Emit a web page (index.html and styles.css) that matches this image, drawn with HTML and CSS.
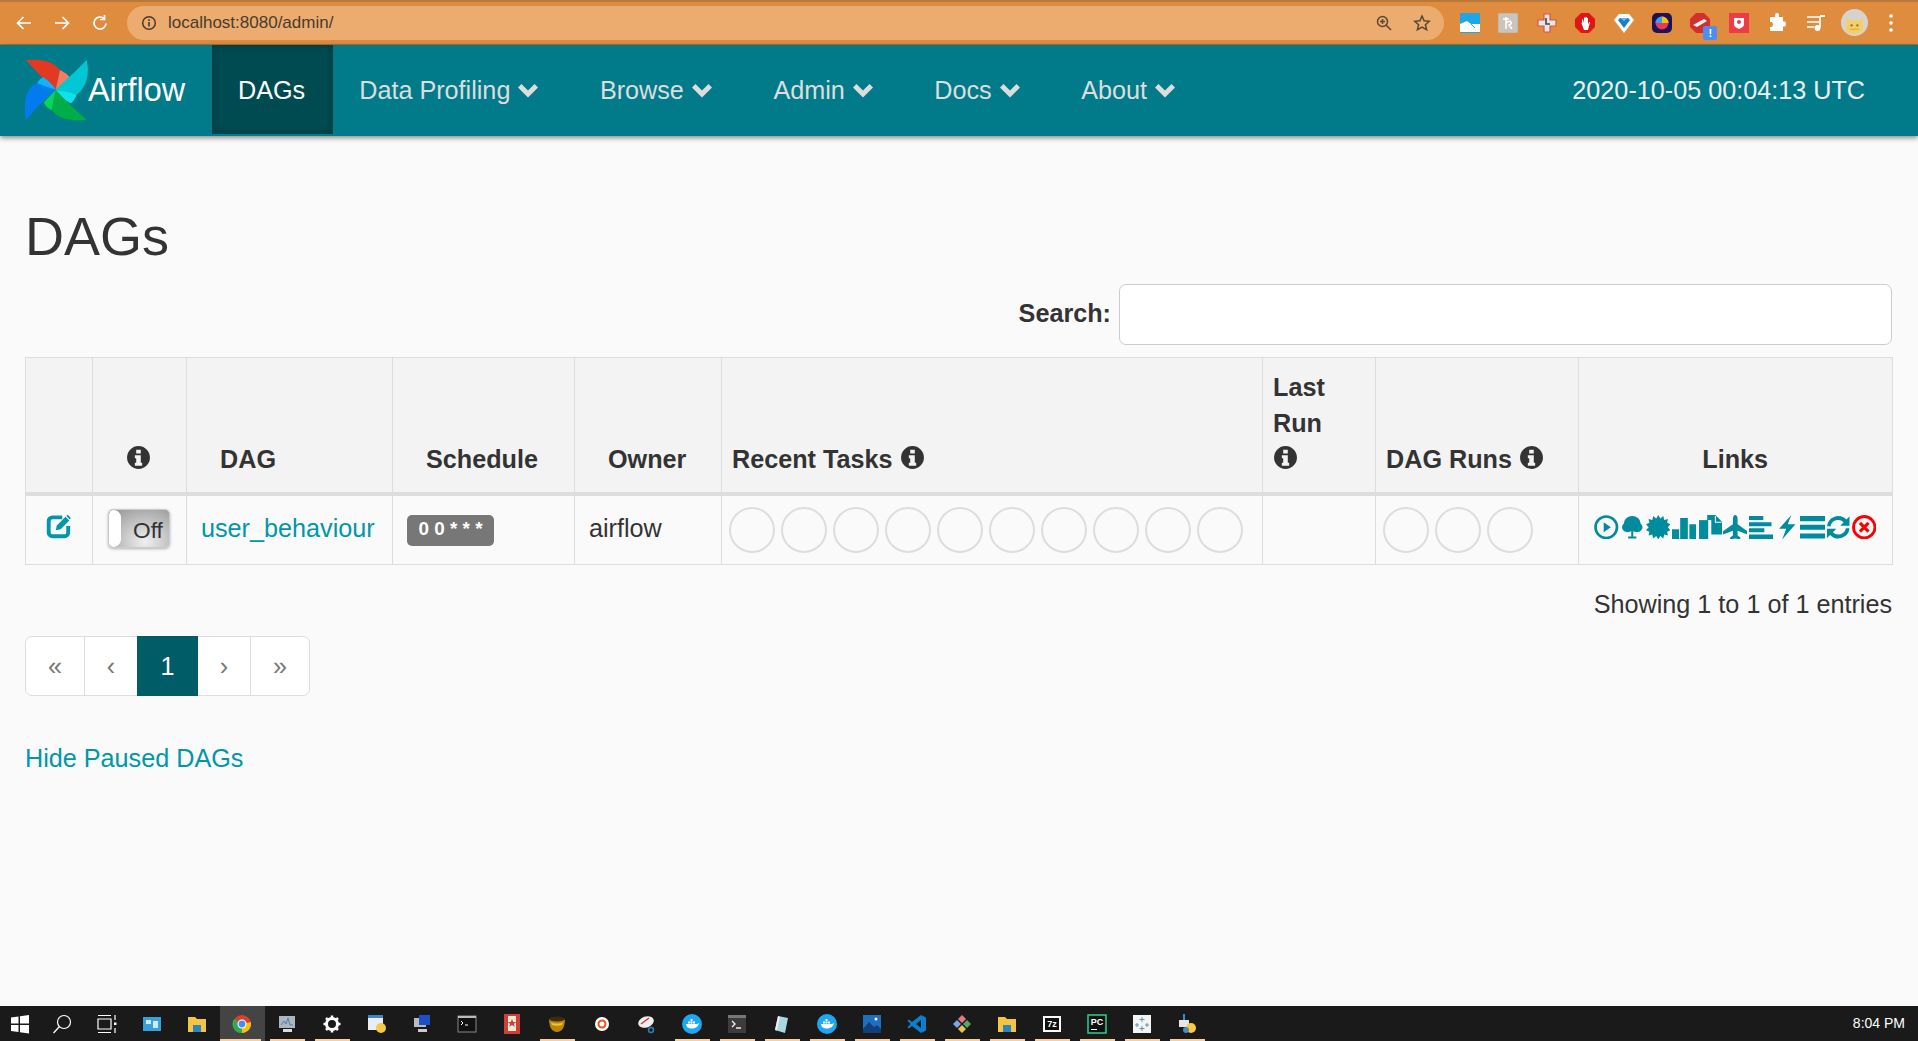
FILE: index.html
```html
<!DOCTYPE html>
<html lang="en">
<head>
    <meta charset="UTF-8">
    <title>Airflow - DAGs</title>
    <link rel="stylesheet" href="styles.css">
</head>
<body>
    <svg class="defs" width="0" height="0">
        <symbol id="info" viewBox="0 0 24 24"><path fill-rule="evenodd" d="M12 1a11 11 0 1 0 0 22 11 11 0 0 0 0-22zM9.800 4.500h4.400v3.700H9.800zM8.500 9.800h5.700v7.200h1.300v2.800h-7v-2.800h1.300v-4.400H8.500z"/></symbol>
        <symbol id="chev" viewBox="0 0 24 24"><path d="M2 9.500 5.500 6 12 12.500 18.500 6 22 9.500 12 19.500z"/></symbol>
    </svg>

    <div class="chrome">
        <div class="chrome-nav">
            <svg class="ci" viewBox="0 0 20 20"><path d="M17 10H4M9.500 4 3.500 10l6 6" fill="none" stroke="#fff" stroke-width="1.700"/></svg>
            <svg class="ci" viewBox="0 0 20 20"><path d="M3 10h13M10.500 4l6 6-6 6" fill="none" stroke="#fff" stroke-width="1.700"/></svg>
            <svg class="ci" viewBox="0 0 20 20"><path d="M16 10.500A6 6 0 1 1 14 5.500M14.500 2v4.500H10" fill="none" stroke="#fff" stroke-width="1.700"/></svg>
        </div>
        <div class="omnibox">
            <svg class="omni-i" viewBox="0 0 16 16"><circle cx="8" cy="8" r="6.300" fill="none" stroke="#4d3a28" stroke-width="1.500"/><path d="M7.200 7h1.600v4.500H7.200zM7.200 4.300h1.600v1.600H7.200z" fill="#4d3a28"/></svg>
            <span class="url">localhost:8080/admin/</span>
            <svg class="omni-r" viewBox="0 0 18 18"><circle cx="7.500" cy="7.500" r="5" fill="none" stroke="#5b4632" stroke-width="1.500"/><path d="M11 11l5 5M5 7.500h5M7.500 5v5" stroke="#5b4632" stroke-width="1.500"/></svg>
            <svg class="omni-r" viewBox="0 0 18 18"><path d="M9 2l2.100 4.800 5.200.5-3.900 3.400 1.200 5.100L9 13.100l-4.600 2.700 1.200-5.100-3.900-3.400 5.200-.5z" fill="none" stroke="#5b4632" stroke-width="1.500"/></svg>
        </div>
        <div class="exts">
            <svg viewBox="0 0 20 20"><rect width="20" height="20" rx="1" fill="#1ea7e8"/><path d="M0 11l7-3 4 3h9v8H0z" fill="#fff"/><path d="M11 11l4 4" stroke="#1ea7e8"/></svg>
            <svg viewBox="0 0 20 20"><rect width="20" height="20" rx="2" fill="#c9c4bd" stroke="#b5b0a9"/><path d="M8 4v12M5 6h6M8 10c3-3 6-2 5 1l-2 1 3 4" fill="none" stroke="#fff" stroke-width="1.500"/></svg>
            <svg viewBox="0 0 20 20"><path d="M7 1h6v6h6v6h-6v6H7v-6H1V7h6z" fill="#e6e6e6" stroke="#d9534f" stroke-width="1.200"/><path d="M9 5v6h4" fill="none" stroke="#444" stroke-width="1.600"/></svg>
            <svg viewBox="0 0 20 20"><path d="M6 0h8l6 6v8l-6 6H6l-6-6V6z" fill="#e31414"/><path d="M6 9l3 8h4l2-8-1 0-1 3V5l-1 0v4V4h-1v5V4.500H9V10L8 6.500H7v4z" fill="#fff"/></svg>
            <svg viewBox="0 0 20 20"><path d="M5 1h10l5 6-10 13L0 7z" fill="#fff"/><path d="M6 5h8l2 2-6 8-6-8z" fill="#1c7fc4"/><path d="M6 5h8l-4 3z" fill="#5fc0ef"/></svg>
            <svg viewBox="0 0 20 20"><rect width="20" height="20" rx="5" fill="#1d1157"/><circle cx="10" cy="10" r="6.500" fill="#e8395b"/><path d="M10 3.500V10h6.500a6.500 6.500 0 0 0-6.500-6.500z" fill="#f4c20d"/><path d="M10 3.500V10H3.500a6.500 6.500 0 0 1 6.500-6.500z" fill="#36a2eb"/></svg>
            <span class="ext-badge"><svg viewBox="0 0 20 20"><path d="M6 0h8l6 6v8l-6 6H6l-6-6V6z" fill="#d32f2f"/><path d="M3 12l11-6 3 2-10 6z" fill="#f1f1f1"/></svg><b>!</b></span>
            <svg viewBox="0 0 20 20"><rect width="20" height="20" fill="#ee3b45"/><path d="M5 5h10v6c0 3-3 4-5 5-2-1-5-2-5-5z" fill="#fff"/><circle cx="10" cy="9" r="2" fill="#ee3b45"/></svg>
            <svg viewBox="0 0 20 20"><path d="M8 1a2 2 0 0 1 4 0c0 1 0 2-.5 2H16v4.500c1 0 3-.5 3 2.500s-2 2.500-3 2.500V17H3v-4c1 0 3 .5 3-2.500S4 8 3 8V3h5.500C8 3 8 2 8 1z" fill="#fff" transform="translate(0 1)"/></svg>
            <svg viewBox="0 0 20 20"><path d="M1 4h12M1 9h12M1 14h7M14 3v11" fill="none" stroke="#fff" stroke-width="1.700"/><path d="M14 3h5" stroke="#fff" stroke-width="2"/><circle cx="11.500" cy="15" r="3" fill="#fff"/></svg>
            <svg class="avatar" viewBox="0 0 28 28"><circle cx="14" cy="14" r="14" fill="#d6d3cf"/><path d="M6 9l4 3h8l4-3 1 13c-3 5-15 5-18 0z" fill="#f3cf6a"/><circle cx="11" cy="17" r="1.200" fill="#8a6d1f"/><circle cx="17" cy="17" r="1.200" fill="#8a6d1f"/><path d="M9 21h10" stroke="#d8a93f"/></svg>
            <svg class="dots" viewBox="0 0 6 20"><circle cx="3" cy="3" r="1.800" fill="#fff"/><circle cx="3" cy="10" r="1.800" fill="#fff"/><circle cx="3" cy="17" r="1.800" fill="#fff"/></svg>
        </div>
    </div>

    <nav class="navbar">
        <a class="brand">
            <svg class="logo" viewBox="0 0 216 216">
                <path d="M18 18C60 15 95 18 120 48L107 107C80 85 50 55 18 18Z" fill="#e43921"/>
                <path d="M120 48C135 55 148 65 148 72C135 88 120 100 107 107Z" fill="#f37d64"/>
                <path d="M107 107C130 85 170 50 200 18C210 60 200 100 170 122Z" fill="#00c7d4"/>
                <path d="M107 107C125 110 155 115 170 122C165 135 158 145 152 148C130 135 115 122 107 107Z" fill="#11e1ee"/>
                <path d="M107 107C135 140 170 170 200 198C160 200 120 200 95 168Z" fill="#00ad46"/>
                <path d="M107 107L95 168C85 165 75 155 72 145C85 130 98 118 107 107Z" fill="#04d659"/>
                <path d="M107 107C80 130 45 165 18 198C10 150 15 100 52 88Z" fill="#017cee"/>
                <path d="M107 107C90 102 70 95 52 88C55 80 62 73 70 70C85 80 100 95 107 107Z" fill="#0cb6ff"/>
            </svg>
            Airflow
        </a>
        <a class="nav-item active">DAGs</a>
        <a class="nav-item">Data Profiling <svg class="chev"><use href="#chev"/></svg></a>
        <a class="nav-item">Browse <svg class="chev"><use href="#chev"/></svg></a>
        <a class="nav-item">Admin <svg class="chev"><use href="#chev"/></svg></a>
        <a class="nav-item">Docs <svg class="chev"><use href="#chev"/></svg></a>
        <a class="nav-item">About <svg class="chev"><use href="#chev"/></svg></a>
        <span class="clock">2020-10-05 00:04:13 UTC</span>
    </nav>

    <main class="container">
        <h1>DAGs</h1>
        <div class="search-row">
            <label for="search">Search:</label>
            <input id="search" type="text">
        </div>
        <table class="dags">
            <thead>
                <tr>
                    <th class="c-edit"></th>
                    <th class="c-toggle center"><svg class="info shift"><use href="#info"/></svg></th>
                    <th class="c-dag wide">DAG</th>
                    <th class="c-sched wide">Schedule</th>
                    <th class="c-owner wide">Owner</th>
                    <th class="c-tasks">Recent Tasks <svg class="info"><use href="#info"/></svg></th>
                    <th class="c-last">Last<br>Run<br><svg class="info"><use href="#info"/></svg></th>
                    <th class="c-runs">DAG Runs <svg class="info"><use href="#info"/></svg></th>
                    <th class="c-links center">Links</th>
                </tr>
            </thead>
            <tbody>
                <tr>
                    <td class="center">
                        <svg class="edit" viewBox="0 0 24 24"><path d="M15 4H6a3.500 3.500 0 0 0-3.500 3.500v10.500A3.500 3.500 0 0 0 6 21.500h11a3.500 3.500 0 0 0 3.500-3.500v-6" fill="none" stroke="#0097a7" stroke-width="3.600"/><path d="M9 16l1-4.500 8-8 3.500 3.500-8 8z" fill="#0097a7"/><path d="M20 1.500l3 3-1.200 1.300-3-3z" fill="#0097a7"/></svg>
                    </td>
                    <td class="center"><span class="switch"><span class="switch-handle"></span><span class="switch-label">Off</span></span></td>
                    <td><a class="link">user_behaviour</a></td>
                    <td><span class="badge">0 0 * * *</span></td>
                    <td>airflow</td>
                    <td class="tight"><div class="circles"><i></i><i></i><i></i><i></i><i></i><i></i><i></i><i></i><i></i><i></i></div></td>
                    <td></td>
                    <td class="tight"><div class="circles"><i></i><i></i><i></i></div></td>
                    <td class="tight">
                        <div class="links">
                            <svg viewBox="0 0 24 24"><circle cx="12" cy="12" r="10.500" fill="none" stroke="#008c9c" stroke-width="2.600"/><path d="M9.500 7l7 5-7 5z" fill="#008c9c"/></svg>
                            <svg viewBox="0 0 24 24"><path d="M11 16c-4 2-9 0-9-4 0-2 1-3 2-4 0-4 4-7 8-7s8 3 8 7c1 1 2 2 2 4 0 4-5 6-9 4v5h3v2H8v-2h3z" fill="#008c9c"/></svg>
                            <svg viewBox="0 0 24 24"><path d="M12 0l2 3.500L17 1l.8 3.800 3.700-.8-.8 3.700L24 9l-2.600 3 2.600 3-3.300 1.300.8 3.700-3.700-.8L17 23l-3-2.500-2 3.500-2-3.500L7 23l-.8-3.800-3.700.8.8-3.700L0 15l2.600-3L0 9l3.300-1.300L2.500 4l3.700.8L7 1l3 2.500z" fill="#008c9c"/></svg>
                            <svg viewBox="0 0 24 24"><path d="M1 14h7v10H1zM9 3h7.500v21H9zM18 9h6.500v15H18z" fill="#008c9c"/></svg>
                            <svg viewBox="0 0 24 24"><path d="M2 5h9v19H2z" fill="#008c9c"/><path d="M10 0h8l7 7v12H14V5h-4z" fill="#008c9c"/><path d="M18 1v6h6" fill="none" stroke="#fafafa" stroke-width="1"/></svg>
                            <svg viewBox="0 0 24 24"><path d="M12 0c1.500 0 2.300 2 2.300 4v5L24 16v3l-9.700-3.500V20l2.700 2v2l-5-1-5 1v-2l2.700-2v-4.500L0 19v-3l9.700-7V4c0-2 .8-4 2.300-4z" fill="#008c9c"/></svg>
                            <svg viewBox="0 0 24 24"><path d="M0 1h14v4H0zM0 7h22v4H0zM0 13h15v4H0zM0 19h25v5H0z" fill="#008c9c"/></svg>
                            <svg viewBox="0 0 24 24"><path d="M16 0L4 13.500h7L7 24l13-15h-7.500z" fill="#008c9c"/></svg>
                            <svg viewBox="0 0 24 24"><path d="M0 1h25v5H0zM0 9.500h25v5H0zM0 18h25v5H0z" fill="#008c9c"/></svg>
                            <svg viewBox="0 0 24 24"><path d="M1 11A11 11 0 0 1 20 4.500L23 1.500v9h-9l3.300-3.300A7.500 7.500 0 0 0 4.500 11zM23 13A11 11 0 0 1 4 19.500L1 22.500v-9h9l-3.300 3.300A7.500 7.500 0 0 0 19.500 13z" fill="#008c9c"/></svg>
                            <svg viewBox="0 0 24 24"><circle cx="12" cy="12" r="10.500" fill="none" stroke="#f00" stroke-width="2.800"/><path d="M7.800 7.800l8.400 8.400M16.200 7.800l-8.400 8.400" stroke="#f00" stroke-width="3.200"/></svg>
                        </div>
                    </td>
                </tr>
            </tbody>
        </table>
        <p class="showing">Showing 1 to 1 of 1 entries</p>
        <ul class="pagination">
            <li>«</li>
            <li>‹</li>
            <li class="current">1</li>
            <li>›</li>
            <li>»</li>
        </ul>
        <a class="link hide-paused">Hide Paused DAGs</a>
    </main>

    <div class="taskbar">
        <span class="tb"><svg viewBox="0 0 20 20"><path d="M1 3.500l7.500-1v7H1zM10 2.300L19 1v8.500h-9zM1 11h7.500v7L1 17zM10 11h9v8.500l-9-1.300z" fill="#fff"/></svg></span>
        <span class="tb"><svg viewBox="0 0 20 20"><circle cx="12" cy="8" r="6.500" fill="none" stroke="#fff" stroke-width="1.200"/><path d="M7.500 12.500L1.500 19" stroke="#fff" stroke-width="1.300"/></svg></span>
        <span class="tb"><svg viewBox="0 0 20 20"><path d="M1 5h13v10H1zM1 1.500h13M1 18.500h13M18 1v5M18 14v5" fill="none" stroke="#fff" stroke-width="1.200"/><rect x="17" y="8.500" width="2.500" height="2.500" fill="#fff"/></svg></span>
        <span class="tb"><svg viewBox="0 0 20 20"><rect x="1" y="3" width="18" height="14" fill="#3aa0d8"/><path d="M4 6h5v4H4zM11 7h5v7h-5z" fill="#cdeaf8"/></svg></span>
        <span class="tb"><svg viewBox="0 0 20 20"><path d="M1 3h7l2 2h9v13H1z" fill="#f5c542"/><path d="M6 11h8v7H6z" fill="#2a84c6"/></svg></span>
        <span class="tb active-app"><svg viewBox="0 0 20 20"><circle cx="10" cy="10" r="9" fill="#d9412f"/><path d="M10 10l8.800-2A9 9 0 0 1 10 19z" fill="#f4c20d"/><path d="M10 10L10 19A9 9 0 0 1 2 5z" fill="#34a853"/><circle cx="10" cy="10" r="4.500" fill="#fff"/><circle cx="10" cy="10" r="3.400" fill="#4a8df2"/></svg></span>
        <span class="tb run"><svg viewBox="0 0 20 20"><rect x="2" y="2" width="16" height="12" fill="#aeb6bd"/><path d="M4 11l3-4 2 3 2-6 2 7h3" fill="none" stroke="#4c7fb5"/><rect x="6" y="15" width="9" height="3" fill="#ddd"/></svg></span>
        <span class="tb run"><svg viewBox="0 0 20 20"><circle cx="10" cy="10" r="5.500" fill="none" stroke="#fff" stroke-width="3"/><path d="M10 1.500v3M10 15.500v3M1.500 10h3M15.500 10h3M4 4l2 2M14 14l2 2M16 4l-2 2M6 14l-2 2" stroke="#fff" stroke-width="2.500"/></svg></span>
        <span class="tb"><svg viewBox="0 0 20 20"><rect x="1" y="1" width="15" height="15" fill="#e8eef3"/><rect x="1" y="1" width="15" height="3" fill="#3f86c6"/><circle cx="14" cy="14" r="5" fill="#f5cb42"/></svg></span>
        <span class="tb"><svg viewBox="0 0 20 20"><rect x="2" y="4" width="12" height="9" fill="#bbb"/><rect x="7" y="1" width="11" height="10" fill="#1f4fc4"/><rect x="6" y="15" width="9" height="3" fill="#ccc"/></svg></span>
        <span class="tb"><svg viewBox="0 0 20 20"><rect x="1" y="2" width="18" height="16" fill="#111" stroke="#888"/><path d="M1 2h18v2H1z" fill="#bbb"/><path d="M4 7l2 2-2 2M8 11h3" fill="none" stroke="#fff"/></svg></span>
        <span class="tb"><svg viewBox="0 0 20 20"><rect x="2" y="0" width="16" height="20" fill="#c94235"/><path d="M6 2h8v15H6z" fill="#f2e6d8"/><path d="M10 5l1.300 3h3l-2.500 2 1 3-2.800-2-2.800 2 1-3-2.500-2h3z" fill="#c94235"/></svg></span>
        <span class="tb run"><svg viewBox="0 0 20 20"><path d="M2 5h16c0 8-3 13-8 13S2 13 2 5z" fill="#b8860b"/><ellipse cx="10" cy="5" rx="8" ry="2.500" fill="#3d2c05"/><path d="M4 8c3 2 9 2 12 0l-1 3c-3 1-7 1-10 0z" fill="#f2c13a"/></svg></span>
        <span class="tb"><svg viewBox="0 0 20 20"><circle cx="10" cy="10" r="7" fill="#fff"/><circle cx="10" cy="10" r="3.500" fill="none" stroke="#e95420" stroke-width="2"/></svg></span>
        <span class="tb"><svg viewBox="0 0 20 20"><ellipse cx="9" cy="8" rx="8" ry="5.500" fill="#eee" transform="rotate(-20 9 8)"/><path d="M4 10l8-6" stroke="#d33" stroke-width="1.500"/><circle cx="14" cy="16" r="2.500" fill="none" stroke="#2d7fb8" stroke-width="1.500"/></svg></span>
        <span class="tb run"><svg viewBox="0 0 20 20"><circle cx="10" cy="10" r="10" fill="#1ea7f2"/><path d="M4 10h11c1 0 1.500-1 2-1-.5 3-3 5.500-7 5.500S4.500 13 4 10z" fill="#fff"/><path d="M6 7.500h2v2H6zM8.500 7.500h2v2h-2zM8.500 5h2v2h-2zM11 7.500h2v2h-2z" fill="#fff"/></svg></span>
        <span class="tb run"><svg viewBox="0 0 20 20"><rect x="1" y="1" width="18" height="18" fill="#3c3c3c"/><rect x="1" y="1" width="18" height="3" fill="#777"/><path d="M5 7l3 3-3 3M9 14h5" fill="none" stroke="#eee" stroke-width="1.400"/></svg></span>
        <span class="tb run"><svg viewBox="0 0 20 20"><path d="M6 2l10 2-3 15-10-3z" fill="#a9d8e0"/><path d="M6 2l2 1-3 13.600L3 16z" fill="#eee"/></svg></span>
        <span class="tb run"><svg viewBox="0 0 20 20"><circle cx="10" cy="10" r="10" fill="#1ea7f2"/><path d="M4 10h11c1 0 1.500-1 2-1-.5 3-3 5.500-7 5.500S4.500 13 4 10z" fill="#fff"/><path d="M6 7.500h2v2H6zM8.500 7.500h2v2h-2zM8.500 5h2v2h-2zM11 7.500h2v2h-2z" fill="#fff"/></svg></span>
        <span class="tb run"><svg viewBox="0 0 20 20"><rect x="1" y="1" width="18" height="18" fill="#1f6fc0"/><path d="M1 15l6-7 5 5 3-2 4 4v4H1z" fill="#123f7a"/><circle cx="14" cy="5" r="1.500" fill="#fff"/></svg></span>
        <span class="tb run"><svg viewBox="0 0 20 20"><path d="M14 1l5 2.500v13L14 19 5 12l-3 2.500-1.500-1L3.500 10 .5 6.500 2 5.500 5 8zM14 6l-5 4 5 4z" fill="#0a7fd0" fill-rule="evenodd"/></svg></span>
        <span class="tb run"><svg viewBox="0 0 20 20"><path d="M10 1l4 4-4 4-4-4z" fill="#ea7a7a"/><path d="M1 10l4-4 4 4-4 4z" fill="#7aa6ea"/><path d="M15 6l4 4-4 4-4-4z" fill="#57a85a"/><path d="M10 11l4 4-4 4-4-4z" fill="#eac34e"/></svg></span>
        <span class="tb run"><svg viewBox="0 0 20 20"><path d="M1 3h7l2 2h9v13H1z" fill="#f5c542"/><path d="M6 11h8v7H6z" fill="#2a84c6"/></svg></span>
        <span class="tb run"><svg viewBox="0 0 20 20"><rect x="1" y="2" width="18" height="16" fill="#fff"/><rect x="3" y="4" width="14" height="12" fill="#111"/></svg><b class="sz">7z</b></span>
        <span class="tb run"><svg viewBox="0 0 20 20"><rect x="1" y="1" width="18" height="18" fill="#111" stroke="#21d789" stroke-width="1.500"/><path d="M4 15h6v1H4z" fill="#fff"/></svg><b class="pc">PC</b></span>
        <span class="tb run"><svg viewBox="0 0 20 20"><rect x="1" y="1" width="18" height="18" fill="#f4f4f4"/><path d="M10 3v5M7.500 5.500h5M5 9v4M3 11h4M15 9v4M13 11h4M10 12v5M7.500 14.500h5" stroke="#5b93b8"/></svg></span>
        <span class="tb run"><svg viewBox="0 0 20 20"><rect x="2" y="6" width="10" height="7" fill="#e6e6e6"/><path d="M7 0v6" stroke="#2d8fd8" stroke-width="2"/><circle cx="14" cy="14" r="5" fill="#f5cb42"/><circle cx="9" cy="16" r="3" fill="#4b8bbe"/></svg></span>
        <span class="tb-time">8:04 PM</span>
    </div>
</body>
</html>
```

FILE: styles.css
```css
* {
    box-sizing: border-box;
}
html, body {
    height: 100%;
}
body {
    margin: 0;
    display: flex;
    flex-direction: column;
    background: #fafafa;
    color: #333;
    font-family: "Liberation Sans", Arial, sans-serif;
    font-size: 25.2px;
    line-height: 36px;
    overflow: hidden;
}
.defs {
    position: absolute;
}

/* browser toolbar */
.chrome {
    height: 45px;
    flex: none;
    display: flex;
    align-items: center;
    background: #e08c3f;
    border-top: 2px solid #b87a3c;
    border-bottom: 1px solid #b0702f;
    padding-bottom: 1px;
}
.chrome-nav {
    display: flex;
    gap: 18px;
    padding-left: 14px;
    width: 127px;
}
.ci {
    width: 20px;
    height: 20px;
}
.omnibox {
    width: 1317px;
    height: 34px;
    display: flex;
    align-items: center;
    background: #ecac70;
    border-radius: 17px;
    padding: 0 13px 0 14px;
}
.omni-i {
    width: 16px;
    height: 16px;
}
.url {
    flex: 1;
    margin-left: 11px;
    font-size: 17px;
    color: #4a3b2c;
}
.omni-r {
    width: 18px;
    height: 18px;
    margin-left: 20px;
}
.exts {
    display: flex;
    align-items: center;
    gap: 18.400px;
    margin-left: 16px;
}
.exts svg {
    width: 20px;
    height: 20px;
}
.exts .avatar {
    width: 27px;
    height: 27px;
    margin: 0 -4px 0 -3px;
}
.exts .dots {
    width: 6px;
    height: 20px;
    margin-left: 6px;
}
.ext-badge {
    position: relative;
    display: flex;
}
.ext-badge b {
    position: absolute;
    right: -7px;
    bottom: -7px;
    width: 14px;
    height: 14px;
    background: #4f8df0;
    color: #fff;
    border-radius: 2px;
    font-size: 11px;
    line-height: 14px;
    text-align: center;
}

/* airflow navbar */
.navbar {
    height: 91px;
    flex: none;
    display: flex;
    align-items: flex-start;
    background: #017b8a;
    box-shadow: 0 2px 5px rgba(0, 0, 0, 0.45);
    color: #ddd;
    position: relative;
}
.brand {
    width: 212px;
    height: 89px;
    display: flex;
    align-items: center;
    padding-left: 20px;
    color: #fff;
    font-size: 32.400px;
}
.logo {
    width: 72px;
    height: 72px;
    flex: none;
    margin-right: -4px;
}
.nav-item {
    height: 89px;
    display: flex;
    align-items: center;
    gap: 6px;
    padding: 0 25px 0 26px;
}
.nav-item.active {
    background: #004a52;
    color: #fff;
    padding: 0 28px 0 26px;
    box-shadow: inset 0 0 8px rgba(0, 0, 0, 0.25);
}
.chev {
    width: 24px;
    height: 24px;
    margin-right: 8.500px;
    fill: #ddd;
}
.clock {
    margin-left: auto;
    padding-right: 53px;
    height: 89px;
    display: flex;
    align-items: center;
    color: #eee;
}

/* content */
.container {
    flex: 1;
    padding: 0 26px 0 25px;
}
h1 {
    margin: 71px 0 0;
    font-size: 54px;
    font-weight: 400;
    line-height: 58px;
}
.search-row {
    display: flex;
    justify-content: flex-end;
    align-items: center;
    gap: 8px;
    margin-top: 19px;
    font-weight: 700;
}
.search-row label {
    padding-bottom: 4px;
}
.search-row input {
    width: 773px;
    height: 61px;
    border: 1px solid #ccc;
    border-radius: 7px;
    background: #fff;
}
.dags {
    width: 1867px;
    margin-top: 12px;
    border-collapse: collapse;
    table-layout: fixed;
}
.dags th, .dags td {
    border: 1px solid #ddd;
    padding: 0 14px 3px;
}
.dags th {
    height: 136px;
    vertical-align: bottom;
    padding: 0 10px 15px;
    background: #f3f3f3;
    text-align: left;
    border-bottom: 4px solid #ddd;
}
.dags td {
    height: 71px;
    vertical-align: middle;
}
.dags td.tight {
    padding: 0 0 0 7px;
}
.dags .center {
    text-align: center;
}
.dags th.wide {
    padding-left: 33px;
}
.c-edit { width: 67px; }
.c-toggle { width: 94px; }
.c-dag { width: 206px; }
.c-sched { width: 182px; }
.c-owner { width: 147px; }
.c-tasks { width: 541px; }
.c-last { width: 113px; }
.c-runs { width: 202.500px; }
.c-links { width: 314.500px; }
.info {
    width: 25px;
    height: 25px;
    vertical-align: -2px;
    fill: #333;
}
.info.shift {
    margin-right: 3px;
}
.edit {
    width: 26px;
    height: 26px;
    display: block;
    margin: -4px auto 0 auto;
}
.link {
    color: #0097a7;
}
.switch {
    display: inline-flex;
    vertical-align: middle;
    width: 62px;
    height: 39px;
    margin-left: -2px;
    border: 1px solid #ccc;
    border-radius: 5px;
    overflow: hidden;
    box-shadow: 0 1px 3px rgba(0, 0, 0, 0.3);
    background: radial-gradient(ellipse at 60% 85%, #f0f0f0, #8f8f8f);
}
.switch-handle {
    width: 12px;
    background: #fff;
    border-radius: 5px 8px 8px 5px;
}
.switch-label {
    flex: 1;
    padding-left: 7px;
    padding-top: 3px;
    font-size: 22.700px;
    line-height: 35px;
}
.badge {
    display: inline-block;
    height: 31px;
    width: 87px;
    vertical-align: middle;
    background: #777;
    border-radius: 5px;
    color: #fff;
    font-size: 18.900px;
    font-weight: 700;
    line-height: 27px;
    text-align: center;
}
.circles {
    display: flex;
    gap: 6px;
}
.circles i {
    width: 46px;
    height: 46px;
    border: 2px solid #ddd;
    border-radius: 50%;
}
.links {
    display: flex;
    gap: 1.300px;
    padding-left: 8.500px;
    margin-top: -6px;
}
.links svg {
    width: 24.500px;
    height: 24.500px;
    flex: none;
}
.showing {
    margin: 21px 0 0;
    text-align: right;
}
.pagination {
    display: inline-flex;
    margin: 14px 0 0;
    padding: 0;
    list-style: none;
    height: 60px;
    background: #fff;
    border: 1px solid #ddd;
    border-radius: 7px;
    color: #777;
}
.pagination li {
    width: 59px;
    display: flex;
    align-items: center;
    justify-content: center;
    border-left: 1px solid #ddd;
}
.pagination li:first-child {
    width: 58px;
    border-left: 0;
}
.pagination li:nth-child(2) {
    width: 53px;
}
.pagination li:nth-child(4) {
    width: 52px;
    border-left: 0;
}
.pagination .current {
    width: 61px;
    margin: -1px 0;
    background: #005c66;
    color: #fff;
    border-left: 0;
}
.hide-paused {
    display: block;
    margin-top: 44px;
}

/* windows taskbar */
.taskbar {
    height: 35px;
    flex: none;
    display: flex;
    background: #1a1a1a;
    color: #fff;
}
.tb {
    width: 45px;
    flex: none;
    display: flex;
    align-items: center;
    justify-content: center;
    position: relative;
}
.tb:first-child {
    margin: 0 -2.500px 0 -3px;
}
.tb svg {
    width: 20px;
    height: 20px;
}
.tb.run::after, .tb.active-app::after {
    content: "";
    position: absolute;
    left: 5px;
    right: 5px;
    bottom: 0;
    height: 2px;
    background: #f8cfa0;
}
.tb.active-app {
    background: #444;
}
.tb.active-app::after {
    left: 0;
    right: 4px;
}
.tb b {
    position: absolute;
    font-size: 9px;
    line-height: 12px;
}
.tb .sz {
    color: #fff;
}
.tb .pc {
    color: #fff;
    margin-top: -4px;
}
.tb-time {
    margin-left: auto;
    padding-right: 13px;
    font-size: 14px;
    line-height: 35px;
}
```
